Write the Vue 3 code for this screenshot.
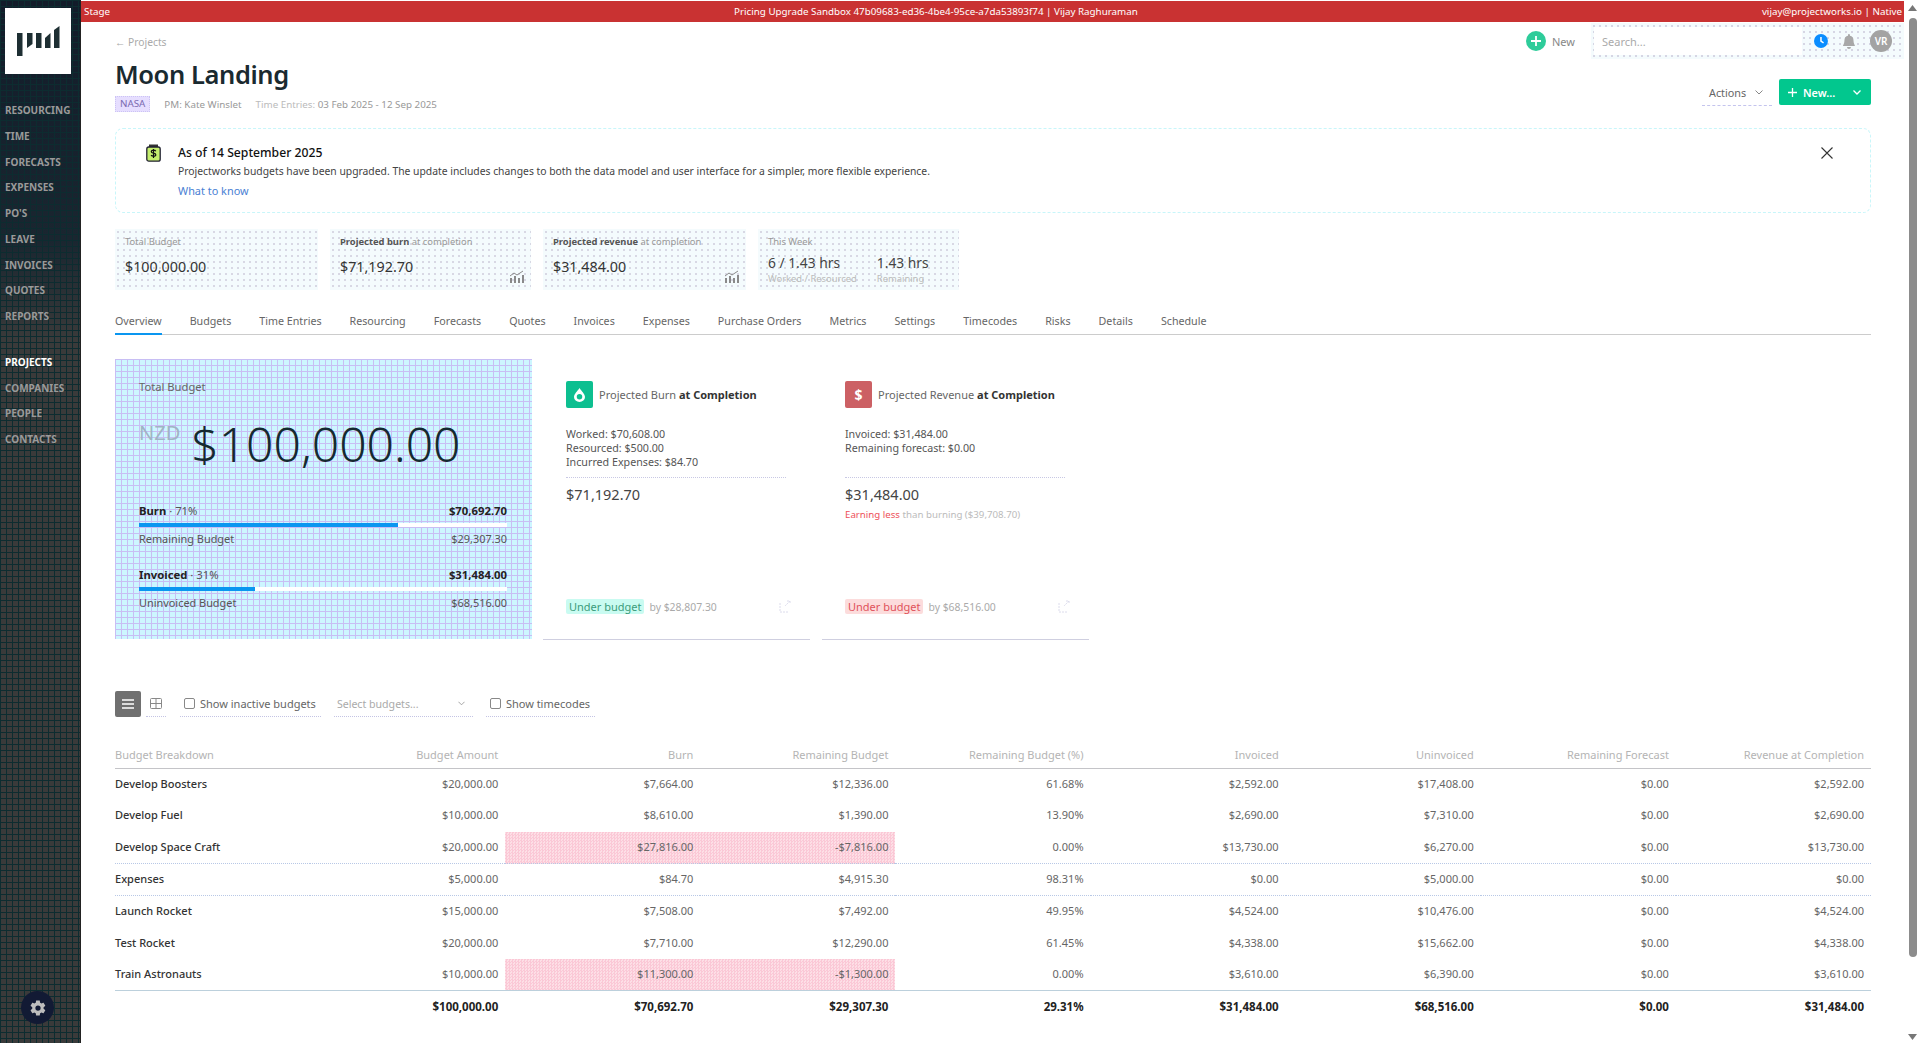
<template>
  <div class="shell">
    <aside class="sidebar">
      <div class="logo">
        <svg width="66" height="66" viewBox="0 0 66 66">
          <g fill="#1e2f33">
            <path d="M12 25h5.500v23H12z" />
            <path d="M22 25h5.500v11L22 40z" />
            <path d="M31 25h5.500v15H31z" />
            <path d="M40 30l5.500-5v15H40z" />
            <path d="M49 22l5.500-4v22H49z" />
          </g>
        </svg>
      </div>
      <nav class="nav">
        <a v-for="item in navTop" :key="item">{{ item }}</a>
      </nav>
      <nav class="nav nav-second">
        <a
          v-for="item in navBottom"
          :key="item"
          :class="{ active: item === 'Projects' }"
        >{{ item }}</a>
      </nav>
      <button class="gear">
        <svg width="18" height="18" viewBox="0 0 24 24">
          <path
            fill="#bdbdbd"
            d="M19.4 13c.1-.3.1-.7.1-1s0-.7-.1-1l2.100-1.600c.2-.2.2-.4.100-.6l-2-3.500c-.1-.2-.4-.3-.6-.2l-2.500 1c-.5-.4-1.100-.7-1.700-1l-.4-2.700c0-.2-.2-.4-.5-.4h-4c-.2 0-.4.200-.5.400L9 5.100c-.6.200-1.200.6-1.700 1l-2.500-1c-.2-.1-.5 0-.6.200l-2 3.500c-.1.200-.1.500.1.600L4.400 11c0 .300-.1.700-.1 1s0 .7.100 1l-2.100 1.600c-.2.200-.2.400-.1.600l2 3.500c.1.200.4.300.6.200l2.500-1c.5.400 1.100.7 1.700 1l.4 2.700c0 .200.2.400.5.400h4c.2 0 .4-.2.5-.4l.4-2.700c.6-.2 1.200-.6 1.700-1l2.500 1c.2.100.5 0 .6-.2l2-3.500c.1-.2.100-.5-.1-.6zM12 15.500a3.500 3.500 0 1 1 0-7 3.500 3.500 0 0 1 0 7z"
          />
        </svg>
      </button>
    </aside>

    <div class="page">
      <header class="env-bar">
        <span>Stage</span>
        <span>Pricing Upgrade Sandbox 47b09683-ed36-4be4-95ce-a7da53893f74 | Vijay Raghuraman</span>
        <span>vijay@projectworks.io | Native</span>
      </header>

      <div class="content">
        <div class="top-row">
          <a class="crumb">← Projects</a>
          <div class="top-tools">
            <a class="quick-new">
              <span class="plus-circle">
                <svg width="12" height="12" viewBox="0 0 12 12">
                  <path d="M6 1v10M1 6h10" stroke="#fff" stroke-width="1.800" />
                </svg>
              </span>
              New
            </a>
            <div class="search-wrap">
              <input class="search" placeholder="Search..." />
              <svg class="tool-icon" width="14" height="14" viewBox="0 0 14 14">
                <circle cx="7" cy="7" r="7" fill="#0a8dff" />
                <path d="M7 3v4.200l2.600 1.600" stroke="#fff" stroke-width="1.500" fill="none" />
              </svg>
              <svg class="tool-icon" width="14" height="15" viewBox="0 0 14 15">
                <path fill="#a8a8a8" d="M7 0a1 1 0 0 1 1 1v.6A4.500 4.500 0 0 1 11.500 6c0 3.500 1.500 5 1.500 6H1c0-1 1.500-2.500 1.500-6A4.500 4.500 0 0 1 6 1.600V1a1 1 0 0 1 1-1zM5 13h4a2 2 0 0 1-4 0z" />
              </svg>
              <span class="avatar">VR</span>
            </div>
          </div>
        </div>

        <div class="title-row">
          <div>
            <h1>Moon Landing</h1>
            <div class="meta">
              <span class="client-tag">NASA</span>
              <span>PM: Kate Winslet</span>
              <span class="dates"><i>Time Entries:</i> 03 Feb 2025 - 12 Sep 2025</span>
            </div>
          </div>
          <div class="actions">
            <button class="actions-btn">
              Actions
              <svg width="8" height="5" viewBox="0 0 8 5"><path d="M.5.500 4 4 7.500.5" stroke="#888" fill="none" /></svg>
            </button>
            <button class="new-btn">
              <span class="new-label">
                <svg width="9" height="9" viewBox="0 0 9 9"><path d="M4.500 0v9M0 4.500h9" stroke="#fff" stroke-width="1.300" /></svg>
                New...
              </span>
              <svg width="8" height="5" viewBox="0 0 8 5"><path d="M.5.500 4 4 7.500.5" stroke="#fff" stroke-width="1.300" fill="none" /></svg>
            </button>
          </div>
        </div>

        <section class="notice">
          <svg class="notice-icon" width="15" height="18" viewBox="0 0 15 18">
            <path d="M3 .5h9V3H3z" fill="#333" />
            <rect x=".8" y="3" width="13.400" height="14.200" rx="2" fill="#c4ee6d" stroke="#223" stroke-width="1.300" />
            <path d="M9.800 7.200C9.400 6.500 8.600 6.200 7.500 6.200c-1.300 0-2.200.6-2.200 1.500 0 2 4.500 1 4.500 3 0 .9-1 1.500-2.300 1.500-1.100 0-2-.4-2.400-1.100M7.500 5v9" stroke="#111" stroke-width="1.200" fill="none" />
          </svg>
          <div class="notice-body">
            <h4>As of 14 September 2025</h4>
            <p>Projectworks budgets have been upgraded. The update includes changes to both the data model and user interface for a simpler, more flexible experience.</p>
            <a>What to know</a>
          </div>
          <svg class="notice-close" width="12" height="12" viewBox="0 0 12 12">
            <path d="M.5.500l11 11M11.500.5l-11 11" stroke="#333" stroke-width="1.100" />
          </svg>
        </section>

        <section class="kpis">
          <div class="kpi kpi-total">
            <div class="kpi-label">Total Budget</div>
            <div class="kpi-value">$100,000.00</div>
          </div>
          <div class="kpi kpi-mid">
            <div class="kpi-label"><b>Projected burn</b> at completion</div>
            <div class="kpi-value">$71,192.70</div>
            <svg class="kpi-chart" width="15" height="13" viewBox="0 0 15 13">
              <path d="M1 6l4-3 3 2 6-4" stroke="#8a8a8a" fill="none" />
              <path d="M1 8h2v5H1zM5 6h2v7H5zM9 8h2v5H9zM13 5h2v8h-2z" fill="#8a8a8a" />
            </svg>
          </div>
          <div class="kpi kpi-rev">
            <div class="kpi-label"><b>Projected revenue</b> at completion</div>
            <div class="kpi-value">$31,484.00</div>
            <svg class="kpi-chart" width="15" height="13" viewBox="0 0 15 13">
              <path d="M1 6l4-3 3 2 6-4" stroke="#8a8a8a" fill="none" />
              <path d="M1 8h2v5H1zM5 6h2v7H5zM9 8h2v5H9zM13 5h2v8h-2z" fill="#8a8a8a" />
            </svg>
          </div>
          <div class="kpi kpi-week">
            <div class="kpi-label">This Week</div>
            <div class="week-cols">
              <div>
                <div class="week-value">6 / 1.43 hrs</div>
                <div class="week-sub">Worked / Resourced</div>
              </div>
              <div>
                <div class="week-value">1.43 hrs</div>
                <div class="week-sub">Remaining</div>
              </div>
            </div>
          </div>
        </section>

        <nav class="tabs">
          <a v-for="tab in tabs" :key="tab" :class="{ active: tab === 'Overview' }">{{ tab }}</a>
        </nav>

        <section class="overview">
          <div class="budget-card">
            <div class="budget-label">Total Budget</div>
            <div class="budget-amount">
              <span class="currency">NZD</span>
              <span class="amount">$100,000.00</span>
            </div>
            <div class="progress-group">
              <div class="progress-line"><span><b>Burn</b> · 71%</span><b>$70,692.70</b></div>
              <div class="bar"><div class="bar-fill" :style="{ width: '70.5%' }"></div></div>
              <div class="progress-line sub"><span>Remaining Budget</span><span>$29,307.30</span></div>
            </div>
            <div class="progress-group second">
              <div class="progress-line"><span><b>Invoiced</b> · 31%</span><b>$31,484.00</b></div>
              <div class="bar"><div class="bar-fill" :style="{ width: '31.4%' }"></div></div>
              <div class="progress-line sub"><span>Uninvoiced Budget</span><span>$68,516.00</span></div>
            </div>
          </div>

          <div class="proj-card">
            <div class="proj-head">
              <span class="proj-icon green">
                <svg width="11" height="14" viewBox="0 0 11 14">
                  <path fill="#fff" fill-rule="evenodd" d="M5.500 0C7.500 3 11 6 11 9a5.500 5 0 0 1-11 0C0 6 3.500 3 5.500 0zm0 6a2.500 2.500 0 1 0 0 5.500 2.500 2.500 0 0 0 0-5.500z" />
                </svg>
              </span>
              <span>Projected Burn <b>at Completion</b></span>
            </div>
            <div class="proj-lines">
              <div>Worked: $70,608.00</div>
              <div>Resourced: $500.00</div>
              <div>Incurred Expenses: $84.70</div>
            </div>
            <div class="proj-total">$71,192.70</div>
            <div class="proj-foot">
              <span class="status ok">Under budget</span>
              <span class="by">by $28,807.30</span>
              <svg class="foot-icon" width="12" height="13" viewBox="0 0 12 13">
                <path d="M1 3v9h9M11 1 6 6M8 1h3v3" stroke="#dcdcec" fill="none" stroke-dasharray="2 1" />
              </svg>
            </div>
          </div>

          <div class="proj-card">
            <div class="proj-head">
              <span class="proj-icon red">$</span>
              <span>Projected Revenue <b>at Completion</b></span>
            </div>
            <div class="proj-lines">
              <div>Invoiced: $31,484.00</div>
              <div>Remaining forecast: $0.00</div>
              <div>&nbsp;</div>
            </div>
            <div class="proj-total">$31,484.00</div>
            <div class="earning"><em>Earning less</em> than burning ($39,708.70)</div>
            <div class="proj-foot">
              <span class="status bad">Under budget</span>
              <span class="by">by $68,516.00</span>
              <svg class="foot-icon" width="12" height="13" viewBox="0 0 12 13">
                <path d="M1 3v9h9M11 1 6 6M8 1h3v3" stroke="#dcdcec" fill="none" stroke-dasharray="2 1" />
              </svg>
            </div>
          </div>
        </section>

        <div class="toolbar">
          <button class="view-btn on">
            <svg width="12" height="10" viewBox="0 0 12 10"><path d="M0 1h12M0 5h12M0 9h12" stroke="#fff" stroke-width="1.500" /></svg>
          </button>
          <button class="view-btn grid">
            <svg width="12" height="11" viewBox="0 0 12 11"><rect x=".5" y=".5" width="11" height="10" rx="1" stroke="#888" fill="none" /><path d="M.5 5.500h11M6 .5v10" stroke="#888" /></svg>
          </button>
          <label class="tool-check"><input type="checkbox" /> Show inactive budgets</label>
          <div class="budget-select">
            <span>Select budgets...</span>
            <svg width="7" height="5" viewBox="0 0 8 5"><path d="M.5.500 4 4 7.500.5" stroke="#999" fill="none" /></svg>
          </div>
          <label class="tool-check"><input type="checkbox" /> Show timecodes</label>
        </div>

        <table class="breakdown">
          <thead>
            <tr>
              <th v-for="col in columns" :key="col">{{ col }}</th>
            </tr>
          </thead>
          <tbody>
            <tr v-for="row in rows" :key="row.name" :class="{ ruled: row.ruled }">
              <td>{{ row.name }}</td>
              <td
                v-for="(val, i) in row.values"
                :key="i"
                :class="{ over: row.over && (i === 1 || i === 2) }"
              >{{ val }}</td>
            </tr>
          </tbody>
          <tfoot>
            <tr>
              <td></td>
              <td v-for="(val, i) in totals" :key="i">{{ val }}</td>
            </tr>
          </tfoot>
        </table>
      </div>
    </div>

    <div class="scrollbar">
      <svg width="9" height="6" viewBox="0 0 9 6"><path d="M4.500 0 9 6H0z" fill="#777" /></svg>
      <div class="thumb"></div>
      <svg width="9" height="6" viewBox="0 0 9 6"><path d="M4.500 6 9 0H0z" fill="#777" /></svg>
    </div>
  </div>
</template>

<script setup>
const navTop = ['Resourcing', 'Time', 'Forecasts', 'Expenses', "PO's", 'Leave', 'Invoices', 'Quotes', 'Reports']
const navBottom = ['Projects', 'Companies', 'People', 'Contacts']

const tabs = [
  'Overview', 'Budgets', 'Time Entries', 'Resourcing', 'Forecasts', 'Quotes', 'Invoices', 'Expenses',
  'Purchase Orders', 'Metrics', 'Settings', 'Timecodes', 'Risks', 'Details', 'Schedule'
]

const columns = [
  'Budget Breakdown', 'Budget Amount', 'Burn', 'Remaining Budget', 'Remaining Budget (%)',
  'Invoiced', 'Uninvoiced', 'Remaining Forecast', 'Revenue at Completion'
]

const rows = [
  { name: 'Develop Boosters', values: ['$20,000.00', '$7,664.00', '$12,336.00', '61.68%', '$2,592.00', '$17,408.00', '$0.00', '$2,592.00'] },
  { name: 'Develop Fuel', values: ['$10,000.00', '$8,610.00', '$1,390.00', '13.90%', '$2,690.00', '$7,310.00', '$0.00', '$2,690.00'] },
  { name: 'Develop Space Craft', over: true, ruled: true, values: ['$20,000.00', '$27,816.00', '-$7,816.00', '0.00%', '$13,730.00', '$6,270.00', '$0.00', '$13,730.00'] },
  { name: 'Expenses', ruled: true, values: ['$5,000.00', '$84.70', '$4,915.30', '98.31%', '$0.00', '$5,000.00', '$0.00', '$0.00'] },
  { name: 'Launch Rocket', values: ['$15,000.00', '$7,508.00', '$7,492.00', '49.95%', '$4,524.00', '$10,476.00', '$0.00', '$4,524.00'] },
  { name: 'Test Rocket', values: ['$20,000.00', '$7,710.00', '$12,290.00', '61.45%', '$4,338.00', '$15,662.00', '$0.00', '$4,338.00'] },
  { name: 'Train Astronauts', over: true, values: ['$10,000.00', '$11,300.00', '-$1,300.00', '0.00%', '$3,610.00', '$6,390.00', '$0.00', '$3,610.00'] }
]

const totals = ['$100,000.00', '$70,692.70', '$29,307.30', '29.31%', '$31,484.00', '$68,516.00', '$0.00', '$31,484.00']
</script>

<style>
html,
body {
  margin: 0;
  background: #fff;
}
</style>

<style scoped>
.shell {
  display: flex;
  height: 1043px;
  overflow: hidden;
  font-family: "Noto Sans", "Open Sans", sans-serif;
  font-size: 11px;
  color: #444;
  background: #fff;
}

.sidebar {
  width: 80px;
  flex: none;
  display: flex;
  flex-direction: column;
  border-right: 1px solid #222;
  background-image:
    linear-gradient(#0d2c30 1px, transparent 1px),
    linear-gradient(90deg, #0d2c30 1px, transparent 1px),
    linear-gradient(#121c2a 0, #1a2630 240px, #3a3a3a 340px);
  background-size: 6px 6px, 6px 6px, 100% 100%;
}

.logo {
  width: 66px;
  height: 66px;
  margin: 8px 0 0 5px;
  background: #fff;
}

.nav {
  display: flex;
  flex-direction: column;
  margin-top: 24px;
  padding-left: 5px;
}

.nav a {
  height: 25.75px;
  line-height: 25.75px;
  font-size: 10px;
  font-weight: 700;
  text-transform: uppercase;
  color: #9a9a9a;
}

.nav a.active {
  color: #fff;
}

.nav-second {
  margin-top: 20px;
}

.gear {
  width: 33px;
  height: 33px;
  margin: auto 0 19px 21px;
  padding: 0;
  display: flex;
  align-items: center;
  justify-content: center;
  border: none;
  border-radius: 50%;
  background: #121a34;
}

.page {
  flex: 1;
  min-width: 0;
  display: flex;
  flex-direction: column;
}

.env-bar {
  height: 21px;
  margin-top: 1px;
  padding: 0 2px 1px 3px;
  box-sizing: border-box;
  flex: none;
  display: flex;
  align-items: center;
  justify-content: space-between;
  background: #c93232;
  color: #fff;
  font-size: 9.8px;
}

.content {
  padding: 0 33px 0 34px;
}

.top-row {
  height: 37px;
  display: flex;
  align-items: center;
  justify-content: space-between;
}

.crumb {
  font-size: 10.3px;
  color: #aaa;
  margin-top: 2px;
}

.top-tools {
  display: flex;
  align-items: center;
  margin: 1px -34px 0 0;
}

.quick-new {
  display: flex;
  align-items: center;
  gap: 6px;
  font-size: 11px;
  color: #888;
  margin-right: 16px;
}

.plus-circle {
  width: 20px;
  height: 20px;
  border-radius: 50%;
  background: #2ecc9a;
  display: flex;
  align-items: center;
  justify-content: center;
}

.search-wrap {
  width: 314px;
  height: 36px;
  display: flex;
  align-items: center;
  box-sizing: border-box;
  padding: 4px 13px 4px 3px;
  background-color: #f4fbfd;
  background-image: radial-gradient(#d6d6e4 1.2px, transparent 1.2px);
  background-size: 6px 6px;
}

.search {
  width: 209px;
  height: 28px;
  box-sizing: border-box;
  padding: 0 8px;
  margin-right: 12px;
  border: none;
  outline: none;
  background: #fff;
  font-family: inherit;
  font-size: 11px;
}

.search::placeholder {
  color: #aaa;
}

.tool-icon {
  margin-right: 14px;
}

.avatar {
  width: 22px;
  height: 22px;
  border-radius: 50%;
  background: #a3a3a3;
  color: #fff;
  font-size: 10px;
  font-weight: 600;
  display: flex;
  align-items: center;
  justify-content: center;
}

.title-row {
  display: flex;
  justify-content: space-between;
  align-items: flex-start;
}

h1 {
  margin: 0;
  height: 32px;
  line-height: 30px;
  font-size: 25.5px;
  font-weight: 600;
  color: #1a2a30;
  letter-spacing: -0.4px;
}

.meta {
  margin-top: 5px;
  display: flex;
  align-items: center;
  gap: 14px;
  font-size: 9.8px;
  color: #999;
}

.client-tag {
  padding: 0 4px;
  line-height: 14px;
  background: #e6deff;
  border: 1px dotted #ccc4f4;
  color: #7a6ab0;
}

.dates i {
  font-style: normal;
  color: #bbb;
}

.actions {
  display: flex;
  gap: 7px;
  margin-top: 20px;
}

.actions-btn {
  width: 70px;
  height: 27px;
  padding: 0 0 0 7px;
  display: flex;
  align-items: center;
  gap: 9px;
  border: none;
  border-bottom: 1px dashed #c4c4ee;
  background: #fff;
  font-family: inherit;
  font-size: 10.8px;
  color: #666;
}

.new-btn {
  width: 92px;
  height: 26px;
  padding: 0 10px 0 9px;
  display: flex;
  align-items: center;
  justify-content: space-between;
  border: none;
  border-radius: 2px;
  background: #02c78e;
  color: #fff;
  font-family: inherit;
  font-size: 10.8px;
  font-weight: 600;
}

.new-label {
  display: flex;
  align-items: center;
  gap: 6px;
}

.notice {
  height: 85px;
  margin-top: 16px;
  box-sizing: border-box;
  padding: 14px 37px 0 30px;
  display: flex;
  align-items: flex-start;
  border: 1px dashed #c8f6fa;
  border-radius: 8px;
}

.notice-icon {
  margin: 1px 17px 0 0;
  flex: none;
}

.notice-body {
  flex: 1;
  font-size: 10.35px;
  line-height: 19px;
}

.notice-body h4 {
  margin: 0;
  font-size: 12.2px;
  font-weight: 500;
  color: #111;
}

.notice-body p {
  margin: 0;
  color: #444;
}

.notice-body a {
  font-size: 10.9px;
  color: #4a7fd4;
}

.notice-close {
  margin-top: 4px;
}

.kpis {
  display: flex;
  gap: 12px;
  margin-top: 16px;
}

.kpi {
  position: relative;
  height: 61px;
  box-sizing: border-box;
  padding: 6px 9px 0 10px;
  background-color: #f4fbfd;
  background-image: radial-gradient(#d8d8e4 1.2px, transparent 1.2px);
  background-size: 6px 6px;
}

.kpi-total {
  width: 203px;
}

.kpi-mid {
  width: 201px;
}

.kpi-rev {
  width: 203px;
}

.kpi-week {
  width: 201px;
}

.kpi-label {
  font-size: 9.4px;
  color: #999;
  line-height: 14px;
}

.kpi-label b {
  color: #555;
  font-weight: 700;
}

.kpi-value {
  margin-top: 8px;
  font-size: 14.3px;
  line-height: 20px;
  color: #333;
}

.kpi-chart {
  position: absolute;
  right: 7px;
  bottom: 7px;
}

.week-cols {
  display: flex;
  gap: 20px;
  margin-top: 4px;
}

.week-value {
  font-size: 13.8px;
  line-height: 19px;
  color: #444;
}

.week-sub {
  font-size: 9.4px;
  line-height: 13px;
  color: #bbb;
}

.tabs {
  display: flex;
  gap: 28px;
  height: 30px;
  margin-top: 15px;
  box-sizing: border-box;
  border-bottom: 1px solid #ccc;
}

.tabs a {
  height: 30px;
  box-sizing: border-box;
  line-height: 32px;
  font-size: 10.7px;
  color: #666;
}

.tabs a.active {
  border-bottom: 2px solid #0a96f0;
}

.overview {
  display: flex;
  align-items: flex-start;
  margin-top: 24px;
}

.budget-card {
  width: 417px;
  height: 280px;
  flex: none;
  box-sizing: border-box;
  padding: 19px 25px 0 24px;
  background-color: #cdf6ff;
  background-image:
    linear-gradient(#c8bef4 1px, transparent 1px),
    linear-gradient(90deg, #c8bef4 1px, transparent 1px);
  background-size: 6px 6px;
}

.budget-label {
  font-size: 11.2px;
  line-height: 18px;
  color: #666;
}

.budget-amount {
  display: flex;
  align-items: flex-start;
  gap: 11px;
  margin-top: 14px;
  height: 78px;
}

.currency {
  font-size: 20px;
  line-height: 28px;
  margin-top: 9px;
  color: #9fb4c4;
}

.amount {
  font-size: 48px;
  font-weight: 300;
  line-height: 68px;
  color: #152a30;
}

.progress-group {
  margin-top: 15px;
}

.progress-group.second {
  margin-top: 20px;
}

.progress-line {
  display: flex;
  justify-content: space-between;
  font-size: 11.3px;
  line-height: 16px;
  color: #555;
}

.progress-line b {
  color: #222;
  font-weight: 700;
}

.progress-line.sub {
  margin-top: 4px;
  font-size: 10.9px;
}

.bar {
  height: 4px;
  margin-top: 4px;
  background: #fff;
}

.bar-fill {
  height: 100%;
  background: #0a96f0;
}

.proj-card {
  width: 267px;
  height: 281px;
  flex: none;
  box-sizing: border-box;
  display: flex;
  flex-direction: column;
  padding: 22px 24px 25px 23px;
  margin-left: 12px;
  border-bottom: 1px solid #cfcfe0;
}

.budget-card + .proj-card {
  margin-left: 11px;
}

.proj-head {
  display: flex;
  align-items: center;
  gap: 6px;
  height: 27px;
  font-size: 11px;
  color: #666;
}

.proj-head b {
  color: #333;
  font-weight: 700;
}

.proj-icon {
  width: 27px;
  height: 27px;
  border-radius: 2px;
  display: flex;
  align-items: center;
  justify-content: center;
  color: #fff;
  font-size: 14px;
  font-weight: 700;
}

.proj-icon.green {
  background: #0dbf90;
}

.proj-icon.red {
  background: #cc6064;
}

.proj-lines {
  margin-top: 19px;
  padding-bottom: 8px;
  border-bottom: 1px dotted #c8c8e4;
  font-size: 10.7px;
  line-height: 14px;
  color: #555;
}

.proj-total {
  margin-top: 5px;
  font-size: 14.5px;
  line-height: 22px;
  color: #444;
}

.earning {
  margin-top: 3px;
  font-size: 9.7px;
  line-height: 14px;
  color: #bbb;
}

.earning em {
  font-style: normal;
  color: #ee4f5a;
}

.proj-foot {
  margin-top: auto;
  display: flex;
  align-items: center;
  gap: 5px;
  font-size: 10.4px;
}

.status {
  padding: 0 3px;
  font-size: 11px;
  line-height: 15px;
  border-radius: 2px;
}

.status.ok {
  background: #c9fbf1;
  color: #3b9b7b;
}

.status.bad {
  background: #fcdcdc;
  color: #e0525a;
}

.by {
  color: #aaa;
}

.foot-icon {
  margin: 0 -5px 0 auto;
}

.toolbar {
  display: flex;
  align-items: center;
  margin-top: 51px;
  height: 26px;
}

.view-btn {
  width: 26px;
  height: 26px;
  padding: 0;
  display: flex;
  align-items: center;
  justify-content: center;
  border: none;
  background: transparent;
  border-radius: 2px;
}

.view-btn.on {
  background: #707070;
}

.view-btn.grid {
  width: 20px;
  margin: 0 14px 0 5px;
  border-bottom: 1px dotted #c4c4e4;
  border-radius: 0;
}

.tool-check {
  height: 26px;
  box-sizing: border-box;
  padding: 0 5px 0 4px;
  display: flex;
  align-items: center;
  gap: 5px;
  font-size: 11px;
  color: #666;
  border-bottom: 1px dotted #c4c4e4;
}

.tool-check input {
  width: 11px;
  height: 11px;
  margin: 0;
  appearance: none;
  border: 1px solid #888;
  border-radius: 2px;
  background: #fff;
}

.budget-select {
  width: 139px;
  height: 26px;
  box-sizing: border-box;
  margin: 0 13px;
  padding: 0 8px 0 3px;
  display: flex;
  align-items: center;
  justify-content: space-between;
  font-size: 10.6px;
  color: #aaa;
  border-bottom: 1px dotted #c4c4e4;
}

.breakdown {
  width: 100%;
  margin-top: 25px;
  table-layout: fixed;
  border-collapse: collapse;
  font-size: 11px;
  color: #666;
}

.breakdown th,
.breakdown td {
  padding: 0 7px 2px 0;
  height: 31.85px;
  text-align: right;
  box-sizing: border-box;
  font-weight: 400;
}

.breakdown th:first-child,
.breakdown td:first-child {
  text-align: left;
}

.breakdown td:first-child {
  color: #333;
  font-weight: 500;
}

.breakdown thead th {
  height: 26px;
  padding-bottom: 0;
  color: #b4b4b4;
  border-bottom: 1px solid #c4c4c8;
}

.breakdown tr.ruled td {
  border-bottom: 1px dotted #b8c8e6;
}

.breakdown td.over {
  background-color: #fddfe6;
  background-image: repeating-conic-gradient(#fbc8d6 0 25%, transparent 0 50%);
  background-size: 3px 3px;
}

.breakdown tfoot td {
  border-top: 1px solid #bcd0dc;
  font-size: 11.5px;
  font-weight: 700;
  color: #222;
}

.scrollbar {
  width: 17px;
  flex: none;
  display: flex;
  flex-direction: column;
  align-items: center;
  background: #fff;
  padding-top: 5px;
  box-sizing: border-box;
}

.thumb {
  width: 8px;
  height: 939px;
  margin: 7px 0 auto;
  border-radius: 4px;
  background: #8c8c8c;
}

.scrollbar svg:last-child {
  margin-bottom: 3px;
}
</style>
